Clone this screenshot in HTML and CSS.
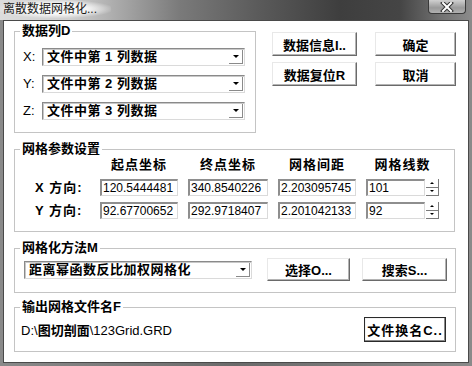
FILE: index.html
```html
<!DOCTYPE html>
<html lang="zh-CN">
<head>
  <meta charset="UTF-8">
  <title>离散数据网格化</title>
  <link rel="stylesheet" href="styles.css">
</head>
<body>

<div class="window">
  <div class="titlebar">
    <span class="title">离散数据网格化...</span>
    <div class="close-btn">
      <svg width="14" height="10" viewBox="0 0 14 10">
        <path d="M3 1 L11 9 M11 1 L3 9" stroke="#333" stroke-width="4" stroke-linecap="square"/>
        <path d="M3 1 L11 9 M11 1 L3 9" stroke="#fff" stroke-width="2" stroke-linecap="square"/>
      </svg>
    </div>
  </div>

  <div class="frame">
    <div class="client">

      <div class="top-row">
        <fieldset class="group group-columns">
          <legend>数据列D</legend>
          <div class="col-rows">
            <div class="col-row">
              <span class="axis">X:</span>
              <div class="combo"><span class="combo-text">文件中第 1 列数据</span><span class="combo-arrow"></span></div>
            </div>
            <div class="col-row">
              <span class="axis">Y:</span>
              <div class="combo"><span class="combo-text">文件中第 2 列数据</span><span class="combo-arrow"></span></div>
            </div>
            <div class="col-row">
              <span class="axis">Z:</span>
              <div class="combo"><span class="combo-text">文件中第 3 列数据</span><span class="combo-arrow"></span></div>
            </div>
          </div>
        </fieldset>

        <div class="side-buttons">
          <button class="btn">数据信息I..</button>
          <button class="btn">确定</button>
          <button class="btn">数据复位R</button>
          <button class="btn">取消</button>
        </div>
      </div>

      <fieldset class="group group-params">
        <legend>网格参数设置</legend>
        <div class="param-grid">
          <span></span>
          <span class="head">起点坐标</span>
          <span class="head">终点坐标</span>
          <span class="head">网格间距</span>
          <span class="head">网格线数</span>

          <span class="row-label">X 方向:</span>
          <div class="field">120.5444481</div>
          <div class="field">340.8540226</div>
          <div class="field">2.203095745</div>
          <div class="spin-wrap">
            <div class="field">101</div>
            <div class="spinner"><span class="spin up"></span><span class="spin down"></span></div>
          </div>

          <span class="row-label">Y 方向:</span>
          <div class="field">92.67700652</div>
          <div class="field">292.9718407</div>
          <div class="field">2.201042133</div>
          <div class="spin-wrap">
            <div class="field">92</div>
            <div class="spinner"><span class="spin up"></span><span class="spin down"></span></div>
          </div>
        </div>
      </fieldset>

      <fieldset class="group group-method">
        <legend>网格化方法M</legend>
        <div class="method-row">
          <div class="combo combo-wide"><span class="combo-text">距离幂函数反比加权网格化</span><span class="combo-arrow"></span></div>
          <button class="btn btn-select">选择O...</button>
          <button class="btn btn-search">搜索S...</button>
        </div>
      </fieldset>

      <fieldset class="group group-output">
        <legend>输出网格文件名F</legend>
        <div class="output-row">
          <span class="path">D:\<b>图切剖面</b>\123Grid.GRD</span>
          <button class="btn btn-default">文件换名C..</button>
        </div>
      </fieldset>

    </div>
  </div>
</div>

</body>
</html>
```

FILE: styles.css
```css
body {
  margin: 0;
  background: #fff;
  font-family: "Liberation Sans", "Noto Sans CJK SC", sans-serif;
  color: #000;
}
.window {
  width: 472px;
  height: 366px;
  display: flex;
  flex-direction: column;
}
.titlebar {
  height: 20px;
  display: flex;
  align-items: flex-start;
  justify-content: space-between;
  background: linear-gradient(90deg, #dcdcdc 0, #cfcfcf 70px, #a8a8a8 120px, #7a7a7a 180px, #5a5a5a 260px, #3e3e3e 340px, #454545 400px, #707070 440px, #8c8c8c 472px);
}
.title {
  font-size: 12px;
  line-height: 18px;
  padding-left: 3px;
  padding-right: 14px;
  color: #1a1a1a;
  background: radial-gradient(ellipse at center, rgba(255,255,255,0.85) 40%, rgba(255,255,255,0) 75%);
}
.close-btn {
  width: 38px;
  height: 14px;
  margin-right: 6px;
  box-sizing: border-box;
  border: 1px solid #3a3a3a;
  border-top: none;
  border-radius: 0 0 4px 4px;
  background: linear-gradient(#d0d0d0, #9a9a9a 60%, #b0b0b0);
  display: flex;
  align-items: center;
  justify-content: center;
}
.frame {
  flex: 1;
  padding: 0 3px 3px;
  background: linear-gradient(90deg, #8a8a8a, #6a6a6a 50%, #8a8a8a);
  display: flex;
}
.client {
  flex: 1;
  background: #fff;
  border: 1px solid #4a4a4a;
  padding: 2px 0 0 10px;
}

/* group boxes */
.group {
  margin: 0;
  padding: 0;
  border: 1px solid #c4c4c4;
  box-sizing: border-box;
  min-width: 0;
}
.group legend {
  margin-left: 5px;
  padding: 0 2px;
  font-weight: bold;
  font-size: 13px;
  line-height: 16px;
}

.top-row {
  display: flex;
  align-items: flex-start;
}
.group-columns {
  width: 242px;
}
.col-rows {
  display: flex;
  flex-direction: column;
  gap: 9px;
  padding: 9px 10px 12px 8px;
}
.col-row {
  display: flex;
  height: 18px;
}
.axis {
  width: 19px;
  font-size: 13px;
  line-height: 18px;
}

.combo {
  flex: 1;
  display: flex;
  box-sizing: border-box;
  height: 18px;
  border: 1px solid #dadada;
  border-top-color: #8a8a8a;
  border-left-color: #8a8a8a;
  box-shadow: inset 1px 1px 0 #c8c8c8;
}
.combo-text {
  flex: 1;
  padding-left: 4px;
  font-weight: bold;
  font-size: 13px;
  line-height: 16px;
  letter-spacing: 0.5px;
  white-space: nowrap;
  overflow: hidden;
}
.combo-arrow {
  width: 14px;
  margin: 1px 1px 1px 0;
  box-sizing: border-box;
  border-right: 1px solid #8a8a8a;
  border-bottom: 1px solid #8a8a8a;
  display: flex;
  align-items: center;
  justify-content: center;
}
.combo-arrow::after {
  content: "";
  border-left: 3px solid transparent;
  border-right: 3px solid transparent;
  border-top: 3px solid #000;
}

.btn {
  box-sizing: border-box;
  margin: 0;
  padding: 0;
  background: #fff;
  border: 1px solid #e8e8e8;
  border-right-color: #6a6a6a;
  border-bottom-color: #6a6a6a;
  box-shadow: inset -1px -1px 0 #b4b4b4;
  font-family: "Liberation Sans", "Noto Sans CJK SC", sans-serif;
  font-weight: bold;
  font-size: 13px;
  color: #000;
}
.side-buttons {
  display: grid;
  grid-template-columns: 85px 81px;
  grid-auto-rows: 24px;
  column-gap: 18px;
  row-gap: 6px;
  margin: 9px 0 0 16px;
}

.group-params {
  width: 441px;
  margin-top: 8px;
}
.param-grid {
  display: grid;
  grid-template-columns: 55px 78px 80px 78px 73px;
  grid-template-rows: 16px 17px 17px;
  column-gap: 10px;
  row-gap: 6px;
  padding: 0 0 12px 20px;
  align-items: center;
}
.head {
  text-align: center;
  font-weight: bold;
  font-size: 13px;
  letter-spacing: 1px;
  line-height: 16px;
}
.row-label {
  font-weight: bold;
  font-size: 13px;
  letter-spacing: 1px;
  line-height: 17px;
}
.field {
  box-sizing: border-box;
  height: 17px;
  border: 1px solid #dadada;
  border-top: 2px solid #8e8e8e;
  border-left: 2px solid #8e8e8e;
  padding-left: 1px;
  font-size: 12px;
  line-height: 14px;
  white-space: nowrap;
  overflow: hidden;
}
.spin-wrap {
  display: flex;
  height: 17px;
}
.spin-wrap .field {
  width: 59px;
}
.spinner {
  width: 13px;
  margin-left: 1px;
  display: flex;
  flex-direction: column;
}
.spin {
  flex: 1;
  box-sizing: border-box;
  border-right: 1px solid #7a7a7a;
  border-bottom: 1px solid #7a7a7a;
  display: flex;
  align-items: center;
  justify-content: center;
}
.spin.up::after {
  content: "";
  border-left: 2px solid transparent;
  border-right: 2px solid transparent;
  border-bottom: 2px solid #000;
}
.spin.down::after {
  content: "";
  border-left: 2px solid transparent;
  border-right: 2px solid transparent;
  border-top: 2px solid #000;
}

.group-method {
  width: 442px;
  margin-top: 8px;
}
.method-row {
  display: flex;
  align-items: center;
  height: 23px;
  padding: 2px 0 11px 9px;
}
.combo-wide {
  flex: none;
  width: 228px;
}
.btn-select {
  width: 83px;
  height: 23px;
  margin-left: 15px;
}
.btn-search {
  width: 85px;
  height: 23px;
  margin-left: 12px;
}

.group-output {
  width: 442px;
  margin-top: 6px;
}
.output-row {
  display: flex;
  align-items: center;
  justify-content: space-between;
  padding: 2px 9px 9px 6px;
}
.path {
  font-size: 13px;
}
.path b {
  font-weight: bold;
}
.btn-default {
  width: 82px;
  height: 25px;
  border: 1px solid #2a2a2a;
  box-shadow: inset -1px -1px 0 #8a8a8a, inset 1px 1px 0 #f4f4f4;
  letter-spacing: 1px;
}
```
